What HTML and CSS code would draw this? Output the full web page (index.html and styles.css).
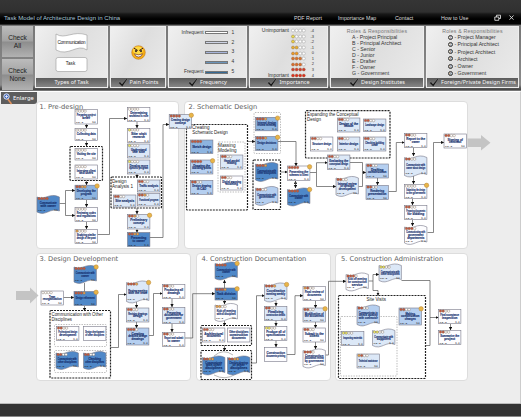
FILE: index.html
```html
<!DOCTYPE html>
<html lang="en">
<head>
<meta charset="utf-8">
<title>Task Model of Architecture Design in China</title>
<link rel="stylesheet" href="styles.css">
</head>
<body>
<header class="topbar">
  <h1>Task Model of Architecture Design in China</h1>
  <nav><a>PDF Report</a><a>Importance Map</a><a>Contact</a><a>How to Use</a></nav>
  <svg class="winicons" width="22" height="8" viewBox="0 0 22 8"><g fill="none" stroke="#ddd" stroke-width=".9"><path d="M2.5 3V1.2H6.5V4.5H5M.8 3H4.8V6.3H.8zM15.5 1.5l4 4.2M19.5 1.5l-4 4.2"/></g></svg>
</header>
<section class="toolbar">
  <div class="checks"><button>Check<br>All</button><button>Check<br>None</button></div>
  <div class="card types">
    <div class="body">
      <svg width="34" height="41" viewBox="0 0 34 41"><g fill="#fff" stroke="#999" stroke-width=".6"><path d="M1 2C10 8 18-2 32 3V18C22 11 14 25 1 18z"/><rect x="1" y="25.500" width="31" height="14" rx="2"/></g><text x="16.500" y="11.800" textLength="28" class="svgtext">Communication</text><text x="15.500" y="33.300" class="svgtext">Task</text></svg>
    </div>
    <div class="foot">Types of Task</div>
  </div>
  <div class="card pain">
    <div class="body">
      <svg width="15" height="15" viewBox="0 0 15 15"><circle cx="7.500" cy="7.500" r="6.800" fill="#f5ad16" stroke="#bd6c0b" stroke-width=".5"/><ellipse cx="7" cy="5.500" rx="5" ry="4" fill="#ffda42"/><path d="M3 3.200L6.800 5.500M12 3.200L8.200 5.500" stroke="#422" stroke-width="1"/><circle cx="5" cy="6.100" r="1.100" fill="#322"/><circle cx="10" cy="6.100" r="1.100" fill="#322"/><path d="M3.500 8.800Q7.500 11 11.500 8.800Q10.500 12 7.500 12T3.500 8.800z" fill="#fff" stroke="#522" stroke-width=".6"/></svg>
    </div>
    <div class="foot checked">Pain Points</div>
  </div>
  <div class="card freq">
    <div class="body scale">
      <span>Infrequent</span><i class="f1"></i><b>1</b>
      <span></span><i class="f2"></i><b>2</b>
      <span></span><i class="f3"></i><b>3</b>
      <span></span><i class="f4"></i><b>4</b>
      <span>Frequent</span><i class="f5"></i><b>5</b>
    </div>
    <div class="foot checked">Frequency</div>
  </div>
  <div class="card imp">
    <div class="body ratings" id="ratings"></div>
    <div class="foot checked">Importance</div>
  </div>
  <div class="card inst">
    <div class="body roles"><h2>Roles &amp; Responsibilities</h2>
      <ul><li>A - Project Principal</li><li>B - Principal Architect</li><li>C - Senior</li><li>D - Junior</li><li>E - Drafter</li><li>F - Owner</li><li>G - Government</li></ul></div>
    <div class="foot checked">Design Institutes</div>
  </div>
  <div class="card firms">
    <div class="body roles"><h2>Roles &amp; Responsibilities</h2>
      <ul><li><em>1</em> - Project Manager</li><li><em>2</em> - Principal Architect</li><li><em>3</em> - Project Architect</li><li><em>4</em> - Architect</li><li><em>5</em> - Owner</li><li><em>6</em> - Government</li></ul></div>
    <div class="foot checked">Foreign/Private Design Firms</div>
  </div>
</section>
<main class="canvas">
  <div class="enlarge"><svg width="12" height="13" viewBox="0 0 12 13"><path d="M6 6l4.500 6" stroke="#e0905a" stroke-width="1.500"/><circle cx="5.500" cy="4.500" r="2.700" fill="#4165b5" stroke="#dde6fa" stroke-width="1"/><path d="M4 4.500h3M5.500 3v3" stroke="#fff" stroke-width=".7"/></svg>Enlarge</div>
  <div class="row first"><section class="phase p1"><h3>1. Pre-design</h3></section><section class="phase p2"><h3>2. Schematic Design</h3></section></div>
  <div class="row second"><section class="phase p3"><h3>3. Design Development</h3></section><section class="phase p4"><h3>4. Construction Documentation</h3></section><section class="phase p5"><h3>5. Construction Administration</h3></section></div>
  <svg class="diagram" id="diagram" width="521" height="312" viewBox="0 91 521 312"></svg>
</main>
<footer></footer>
<script src="diagram.js"></script>
</body>
</html>
```
FILE: styles.css
```css
* { box-sizing: border-box; }
body { margin: 0; width: 521px; height: 417px; overflow: hidden; display: flex; flex-direction: column; background: #ededed; font-family: "Liberation Sans", Arial, sans-serif; }
h1, h2, h3, ul { margin: 0; padding: 0; font-weight: normal; list-style: none; }
.topbar { height: 25px; flex: none; display: flex; align-items: flex-end; padding: 0 5px 3px 4px; background: linear-gradient(#353535 0, #303030 12px, #181818 14px, #000 19px, #050505 24px, #555 25px); color: #ddd; }
.topbar h1 { width: 290px; font-size: 6.1px; line-height: 8px; color: #a9c6d8; }
.topbar nav { display: flex; flex: 1; font-size: 5.3px; line-height: 8px; }
.topbar nav a:nth-child(1) { width: 44px; }
.topbar nav a:nth-child(2) { width: 57px; }
.topbar nav a:nth-child(3) { width: 46px; }
.winicons { flex: none; }
.toolbar { height: 66px; flex: none; display: flex; gap: 2px; padding: 1px 2px 3px 2px; background: linear-gradient(#777, #8b8b8b 60px, #555 63px, #444 65px, #aaa 66px); }
.checks { width: 31px; display: flex; flex-direction: column; gap: 2px; margin-bottom: -2px; }
.checks button { flex: 1; padding: 0; border: 0; font: 6.6px/8px "Liberation Sans", Arial, sans-serif; color: #222; background: linear-gradient(#bcbcbc, #a2a2a2 48%, #8d8d8d 52%, #b2b2b2); }
.card { display: flex; flex-direction: column; background: linear-gradient(120deg, #f0f0f0, #dedede 45%, #ebebeb); border: .5px solid #eee; }
.types { width: 73px; }
.pain { width: 56px; }
.freq { width: 79px; }
.imp { width: 79px; }
.inst { width: 94px; }
.firms { flex: 1; }
.body { flex: 1; min-height: 0; display: flex; justify-content: center; align-items: center; color: #333; }
.svgtext { font: 4.6px "Liberation Sans", sans-serif; fill: #222; text-anchor: middle; }
.foot { height: 9px; flex: none; display: flex; align-items: center; justify-content: center; gap: 2px; background: linear-gradient(#5b5b5b, #858585); color: #f4f4f4; font: 5.5px/9px "Noto Sans", sans-serif; white-space: nowrap; }
.foot svg { flex: none; }
.scale { display: grid; grid-template-columns: 24px 23px 6px; column-gap: 1px; grid-auto-rows: 9.9px; align-content: center; justify-content: center; align-items: center; font-size: 4.9px; line-height: 6px; padding-right: 1px; }
.scale span { text-align: right; }
.scale b { font-weight: normal; padding-left: 3px; }
.scale i { height: 3.5px; border: .7px solid #777; background: #fff; }
.scale .f2 { background: #ccd2e3; }
.scale .f3 { background: #a6b4da; }
.scale .f4 { background: #6b94ba; }
.scale .f5 { background: #356994; }
.ratings { display: flex; flex-direction: column; align-items: stretch; justify-content: center; padding: 1px 10px 0 9px; }
.rating { display: grid; grid-template-columns: 30px 15px 6px; column-gap: 2px; height: 5.6px; align-items: center; font-size: 5px; line-height: 5.5px; }
.rating span { text-align: right; direction: rtl; white-space: nowrap; }
.rating b { font-weight: normal; font-size: 4px; text-align: right; }
.roles { display: block; padding: 1px 0 0; }
.roles h2 { font-size: 5.2px; line-height: 6px; text-align: center; color: #777; letter-spacing: .2px; }
.roles li { font-size: 5.2px; line-height: 6px; padding-left: 21px; white-space: nowrap; }
.firms li { line-height: 7.25px; padding-left: 21px; }
.firms em { display: inline-block; width: 5px; height: 5px; border: .5px solid #333; border-radius: 50%; font: 3.6px/4px "Liberation Sans", sans-serif; text-align: center; vertical-align: .5px; }
.canvas { position: relative; height: 312px; flex: none; padding: 8.500px 0 0 36px; border-right: 1px solid #ccc; border-top: 1px solid #fff; }
.enlarge { position: absolute; left: 1px; top: 0; width: 36px; height: 12px; display: flex; align-items: center; background: #5d5d5d; color: #fff; font: 5.8px/12px "Noto Sans", sans-serif; border-radius: 0 0 3px 0; }
.row { display: flex; gap: 4.500px; width: 432px; }
.first { height: 148px; margin-bottom: 4.500px; }
.second { height: 128px; }
.phase { background: #fff; border: .5px solid #ddd; border-radius: 4px; padding: 1px 2.5px; }
.phase h3 { font: 6.7px/9px "DejaVu Sans", Verdana, sans-serif; color: #606060; white-space: nowrap; }
.p1 { width: 143px; }
.p2 { flex: 1; padding-left: 4px; }
.p3 { width: 155px; }
.p4 { width: 135px; padding-left: 5px; }
.p5 { flex: 1; padding-left: 5px; }
.diagram { position: absolute; left: 0; top: -1px; }
.tiny { font: bold 2.7px "Liberation Sans", sans-serif; fill: #17316f; stroke: #17316f; stroke-width: .12px; text-anchor: middle; }
.code { font: bold 2.2px "Liberation Sans", sans-serif; fill: #222; }
.group { font: 4.9px "Liberation Sans", sans-serif; fill: #222; }
footer { flex: 1; background: #333; border-top: 1px solid #bbb; border-bottom: 1px solid #888; }
```
FILE: diagram.js
```js
const fills = { W: "#fdfdff", L: "#dce8f7", M: "#b5cff0", B: "#8db4e0", D: "#4f88c8" };
const dots = { o: "#fff", y: "#f1ec62", a: "#eda54c", r: "#c9573d" };
const out = [];

function line(d, arrow) {
  out.push(`<path d="${d}" fill="none" stroke="#555" stroke-width=".7"${arrow === false ? "" : ' marker-end="url(#tip)"'}/>`);
}
function box(x, y, x2, y2, soft) {
  out.push(`<rect x="${x}" y="${y}" width="${x2 - x}" height="${y2 - y}" rx="1" fill="none" stroke="${soft ? "#aaa" : "#222"}" stroke-width="${soft ? 0.8 : 1.2}" stroke-dasharray="${soft ? "1.4 1.2" : "2 1"}"/>`);
}
// spec: fill letter, optional "~" for a wave and "*" for a pain-point badge
function node(x, y, h, spec, marks, label) {
  const w = 22.4, wave = spec.includes("~"), fill = fills[spec[0]];
  const style = `fill="${fill}" stroke="#778" stroke-width=".6"`;
  if (wave) out.push(`<path d="M${x} ${y + 2}C${x + 8} ${y + 6} ${x + 12} ${y - 3} ${x + w} ${y + 2}V${y + h - 3}C${x + 13} ${y + h - 7} ${x + 9} ${y + h + 3} ${x} ${y + h - 2}z" ${style}/>`);
  else out.push(`<rect x="${x}" y="${y}" width="${w}" height="${h}" ${style}/>`);
  const top = y + (wave ? 3.6 : 1.6);
  [...marks].forEach((m, i) => out.push(`<circle cx="${x + 2 + i * 2.7}" cy="${top}" r="1.25" fill="${dots[m]}" stroke="#765" stroke-width=".4"/>`));
  const lines = label.split("|");
  const step = 2.75;
  const start = y + h / 2 + 0.9 - (lines.length - 1) * step / 2;
  lines.forEach((t, i) => {
    const len = Math.min(19, t.length * 1.55);
    out.push(`<text class="tiny" x="${x + w / 2}" y="${start + i * step}" textLength="${len}" lengthAdjust="spacingAndGlyphs">${t}</text>`);
  });
  if (marks) {
    const b = y + h - (wave ? 3.2 : 0.7);
    out.push(`<text class="code" x="${x + 1}" y="${b}">C,D - E</text><text class="code" x="${x + w - 1}" y="${b}" text-anchor="end">③-④</text>`);
  }
  if (spec.includes("*")) out.push(`<circle cx="${x + w - 0.3}" cy="${y + (wave ? 2 : 0.8)}" r="2.2" fill="#e8b548" stroke="#b8863c" stroke-width=".5"/>`);
}
function caption(x, y, text, len) {
  out.push(`<text class="group" x="${x}" y="${y}" textLength="${len}" lengthAdjust="spacingAndGlyphs">${text}</text>`);
}

out.push('<defs><marker id="tip" markerUnits="userSpaceOnUse" markerWidth="4" markerHeight="4" refX="3" refY="1.6" orient="auto"><path d="M0 0L3.2 1.6L0 3.2z" fill="#111"/></marker></defs>');
out.push('<g fill="#c4c4c4"><path d="M467.500 138.500H481V135L490.500 142.800L481 150.500V147H467.500z"/><path d="M16 291H30V287.500L38.500 295.500L30 303.500V300H16z"/></g>');

[[70, 146.5, 102.5, 180.5], [111, 177, 161.5, 208], [186.5, 124.5, 247.5, 210], [218, 142, 245, 192, 1],
 [254, 112.5, 280.5, 153.5, 1], [253, 160, 280.5, 209.5], [305.5, 110.7, 390, 158],
 [50, 310.5, 110.5, 378], [54.5, 324.5, 106.5, 346.5, 1], [54.5, 350.5, 106.5, 372.5, 1],
 [201, 325.5, 251.5, 345.5], [201, 350.5, 251.5, 379.5], [338.5, 295.5, 425.5, 378.5], [340.5, 316.5, 397, 376, 1]
].forEach(b => box(...b));

["M97.500 234.500H109.500V118.500H127", "M149.500 237.500H163V124.500H169", "M59.500 203.500H65.500V190.500H75", "M65.500 203.500V215.500H75",
 "M86.500 124V128", "M86.500 141V146", "M86.500 180.500V185", "M86.500 200V207", "M86.500 222V229", "M137 122V128", "M137 174V178", "M137 208V214", "M137 229V232.500",
 "M247.500 141.500H255", "M278 141.500H296V166", "M280.500 172H287.500", "M295.500 188V181", "M295.500 181V188", "M310 172.500H316.500V162.700H327.500", "M316.500 172.500V186.500H336",
 "M362.500 172.500H366", "M377.500 178V185", "M388.500 191.500H396.300V142.500H404.500", "M413.500 147.500V156", "M413.500 176V184", "M412.500 198.500V205", "M412.500 219.500V226", "M427.500 232.500H433.500V142.500H444",
 "M63.500 297.500H74", "M84.500 306V311", "M110.500 347.500H118.500V294.500H126.500", "M136.500 302V308", "M136.500 322V328", "M149 335.500H153.500V293.500H162.500", "M172 298.500V307", "M172 323.500V332", "M185 338H192.700V293.700H215",
 "M224.500 288V280", "M224.500 300V304", "M224.500 321V326", "M224.500 345.500V351", "M251.500 363H256.500V295.700H264.500", "M276 301V306", "M276 320.500V326", "M276 340.500V347", "M287 354.500H295V295.700H303", "M315.500 301V308", "M315.500 322V328", "M315.500 342V349", "M325.500 355H328.500V281.300H346",
 "M368.500 281H373V274.500H379", "M373 281V290.500H378V295.500", "M401.500 280.500H430V317.500H438.500", "M450.500 324V330"
].forEach(d => line(d));
["M350 162.500H362.500V186.500H358.500", "M84.500 283V291.500", "M425.500 345.500H430V317.500"].forEach(d => line(d, false));
out.push('<path d="M214 356Q223 348 233 355M214 375Q225 381 236 374" fill="none" stroke="#999" stroke-width=".7"/>');

[
 [75, 109.5, 14.5, "W", "oooo", "Preparing project|brief"], [75, 128.5, 12, "W", "oooo", "Collecting data"],
 [75, 148.5, 11.5, "W", "oooo", "Visiting the site"], [75, 165, 14, "W", "oooo", "Interview client|and users"],
 [75, 185.2, 14.5, "B*", "rraa", "Developing the|program"], [37, 195, 19, "D~", "rrrr", "Communicate|with owner"],
 [75, 207.5, 14, "W", "oooo", "Reviewing codes|and regulations"], [75, 229.5, 14, "W", "aooo", "Studying similar|design of the past"],
 [127.5, 107.5, 14, "W", "oooo", "Determining|architect's role"], [127.5, 128.3, 14, "W", "yooo", "Site visit|research"],
 [127.5, 144, 14, "L", "yooo", "Understand|the site"], [127.5, 160, 14, "L", "yooo", "Develop more|specific program"],
 [137.5, 180, 12, "L", "rroo", "Traffic analysis"], [137.5, 193.5, 12.5, "L", "rrao", "Functional program"], [113.5, 195, 12, "L", "rroo", "Site analysis"],
 [127.5, 214.5, 14.5, "L*", "rrao", "Preliminary|concept"], [127.5, 232.5, 14, "D", "rraa", "Presenting|to owner"], [169.2, 114.5, 14, "L*", "rrrr", "Creating design|concept"],
 [190.5, 140, 13.5, "B", "rrrr", "Sketch design"], [190.5, 160, 14, "M*", "rrrr", "Drawing the|building plans"], [190.5, 180.5, 14, "M", "rroo", "Design drawing|in CAD"],
 [220.5, 155, 14, "L", "rroo", "Hand model|making"], [220.5, 176, 14, "W", "rroo", "Digital massing|modeling"],
 [255.5, 117.3, 13.5, "B*", "rrra", "Internal design|review meeting"], [255.5, 136.5, 14, "B*", "rrra", "Design decisions"],
 [255.5, 162, 20, "D~", "rrra", "Communicate with|other disciplines"], [255.5, 186, 20, "M~", "rroo", "Communicate with|government"],
 [287.5, 166, 14.5, "W*", "rrrr", "Presenting the|schemes to client"], [287.5, 187.5, 19, "D~*", "rrrr", "Communicate with|owner"],
 [337.5, 118, 14, "L", "rroo", "Design of the|facade"], [363.5, 119, 12.5, "L", "rroo", "Landscape design"], [337.5, 137, 14, "L", "rroo", "Interior design"],
 [363.5, 137, 14, "L", "rroo", "Checking building|code"], [310.5, 137, 14, "W", "rroo", "Structure design"], [327.5, 155, 14.5, "L", "rroo", "Evaluating the|conceptual design"],
 [336, 176, 21, "L~", "rroo", "Internal review|of design|development"], [366, 164, 14, "M", "rroo", "Drafting|construction"], [366, 185.5, 14, "M", "rroo", "Rendering|presentation"],
 [404.5, 133.5, 14, "W", "rroo", "Report to the|owner"], [404.5, 155.5, 22, "L~", "rroo", "Communicate with|owner about design"],
 [404.5, 184.5, 14, "W*", "oooo", "Submitting the design|to the government"], [404.5, 205.5, 14, "W", "rroo", "Preparing documents|for bidding"], [404.5, 225, 20, "W~", "rrro", "Communicating with|government|departments"], [444, 134, 14, "W", "rroo", "Signing of|contract"],
 [41, 291, 14, "W", "oooo", "Team|reorganization"], [74, 265, 19, "D~*", "rrrr", "Communicate with|owner"], [74, 291.5, 14, "D*", "rrra", "Design refinement"],
 [56.5, 326.5, 14, "W", "rroo", "Professional design|development"], [83.5, 326.5, 14, "W", "", "Design development|of other disciplines"],
 [56, 351, 19, "D~", "rroo", "Communicate with|other disciplines"], [83.5, 351, 19, "D~", "rroo", "Checking|other disciplines"],
 [126.5, 280.5, 23, "L~*", "rrra", "Review meeting|with the team"], [126.5, 308, 14, "L", "rroo", "Revising drawings|design"], [126.5, 328, 17, "M", "rrro", "Creating|detailed design|drawings"],
 [162.5, 284.5, 14, "W", "rroo", "Producing all|drawings"], [162.5, 307.5, 16, "L", "rroo", "Preparing|documents for|government"], [162.5, 332.5, 14, "W", "rroo", "Report and submit|to owner"],
 [215, 261.5, 19, "D~*", "rrrr", "Communicate with|owner"], [215, 288, 12, "D*", "rrra", "Task division"], [215, 303, 19, "W~", "aaoo", "Kick off meeting|with all disciplines"],
 [202.5, 328, 14, "W", "rroo", "Architectural|documents"], [227.5, 328, 14, "W", "", "Other disciplines|construction|documents"],
 [202.5, 355.5, 20, "D~", "rraa", "Communicate|with other|disciplines"], [227.5, 355.5, 20, "D~", "rraa", "Checking drawings|of other|disciplines"],
 [264.5, 282.5, 20, "L~*", "rrra", "Coordination|meeting weekly"], [264.5, 306.5, 14, "L", "rroo", "Finalizing|construction details"], [264.5, 326.5, 14, "W", "yyoo", "Produce all of|specifications"], [264.5, 347.5, 14, "W", "", "Construction|documents printing"],
 [303, 286.5, 14, "W", "aroo", "Final review of|documents"], [303, 308, 14, "L*", "rroo", "Modification of|the documents"], [303, 328, 14, "W", "rroo", "Submit to the|client"], [303, 348.5, 20, "W~", "rrro", "Construction|documents review|by government"],
 [346, 272.5, 19, "W~", "rrro", "Kick off meeting|for construction|service"], [379, 263.5, 19, "L~", "yyoo", "Communicate with|other disciplines"],
 [357, 304.5, 22, "M~", "rroo", "Communicate to|check quality|with contractor"], [399, 308, 17, "M*", "rroo", "Making|construction|changes"], [341.5, 331.5, 14, "L", "yyoo", "Inspecting materials"], [372.5, 328.5, 19, "L~", "yyoo", "Communicate with|suppliers"], [357, 354, 14, "L", "aroo", "Technical assistance"],
 [438.5, 309.5, 14, "W", "rroo", "Final acceptance|inspection"], [438.5, 330.5, 14, "W", "rroo", "Summarize the|project"]
].forEach(n => node(...n));

caption(112, 183.2, "Design", 14.5);
caption(112, 188.2, "Analysis 1", 21);
caption(192, 129.3, "Creating", 17.5);
caption(192.3, 134.4, "Schematic Design", 35.5);
caption(218, 147, "Massing", 17.5);
caption(218, 152, "Modeling", 18.5);
caption(307, 116, "Expanding the Conceptual", 51.5);
caption(307, 121.2, "Design", 14);
caption(51.5, 316.2, "Communication with Other", 51.5);
caption(51.5, 321.4, "Disciplines", 20.5);
caption(366.5, 300.8, "Site Visits", 19.5);
document.getElementById("diagram").innerHTML = out.join("");

// importance legend: filled dots per level
const levels = [["Unimportant", 0, "-4"], ["", 1, "-3", "#e8e04c"], ["", 1, "-2", "#e8d040"], ["", 2, "-1", "#e8b030"], ["", 2, "0", "#ee9a22"], ["", 3, "1", "#d8702a"], ["", 3, "2", "#dd6a28"], ["", 4, "3", "#d43a2c"], ["Important", 4, "4", "#e02c1c"]];
document.getElementById("ratings").innerHTML = levels.map(([name, n, value, color]) =>
  `<div class="rating"><span>${name}</span><svg width="15" height="5" viewBox="0 0 15 5">${[0, 1, 2, 3].map(i => `<circle cx="${2 + i * 3.6}" cy="2.5" r="1.5" fill="${i < n ? color : "#fff"}" stroke="${i < n ? "#864" : "#888"}" stroke-width=".4"/>`).join("")}</svg><b>${value}</b></div>`).join("");

document.querySelectorAll(".checked").forEach(el => el.insertAdjacentHTML("afterbegin",
  '<svg width="10" height="9" viewBox="0 0 10 9"><path d="M.5 5L2 3.700L4 6L8.800 .3L9.800 .8L4.300 8.700z" fill="#161616" stroke="#bbb" stroke-width=".3"/></svg>'));
```
